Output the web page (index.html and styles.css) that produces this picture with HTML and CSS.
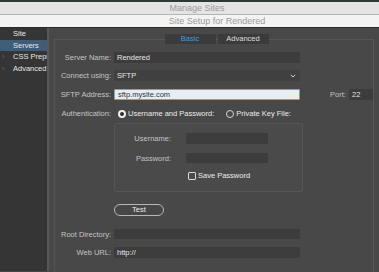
FILE: index.html
```html
<!DOCTYPE html>
<html lang="en">
<head>
    <meta charset="UTF-8">
    <title>Site Setup for Rendered</title>
    <link rel="stylesheet" href="styles.css">
</head>
<body>
    <div class="top-strip"></div>
    <div class="title-bar">Manage Sites</div>
    <div class="title-bar sub">Site Setup for Rendered</div>

    <div class="window">
        <div class="sidebar">
            <div class="side-item">Site</div>
            <div class="side-item active">Servers</div>
            <div class="side-item"><span class="arrow">&rsaquo;</span>CSS Preprocessors</div>
            <div class="side-item"><span class="arrow">&rsaquo;</span>Advanced</div>
        </div>

        <div class="main">
            <div class="tabs">
                <div class="tab selected">Basic</div>
                <div class="tab">Advanced</div>
            </div>

            <div class="panel">
                <div class="row first">
                    <label class="label">Server Name:</label>
                    <div class="field">Rendered</div>
                </div>

                <div class="row r2">
                    <label class="label">Connect using:</label>
                    <div class="field select">SFTP
                        <svg class="chev" width="6" height="4" viewBox="0 0 6 4"><path d="M0.8 0.8 L3 3 L5.2 0.8" fill="none" stroke="#cfcfcf" stroke-width="1"/></svg>
                    </div>
                </div>

                <div class="row r3">
                    <label class="label">SFTP Address:</label>
                    <div class="field light">sftp.mysite.com</div>
                    <label class="port-label">Port:</label>
                    <div class="field port">22</div>
                </div>

                <div class="row r4">
                    <label class="label">Authentication:</label>
                    <span class="radio on"></span><span class="opt">Username and Password:</span>
                    <span class="radio second"></span><span class="opt">Private Key File:</span>
                </div>

                <div class="auth-box">
                    <div class="row b1">
                        <label class="label small">Username:</label>
                        <div class="field short"></div>
                    </div>
                    <div class="row b2">
                        <label class="label small">Password:</label>
                        <div class="field short"></div>
                    </div>
                    <div class="row b3">
                        <span class="check"></span><span class="opt">Save Password</span>
                    </div>
                </div>

                <div class="row test-row">
                    <button class="test-btn">Test</button>
                </div>

                <div class="row r5">
                    <label class="label">Root Directory:</label>
                    <div class="field"></div>
                </div>

                <div class="row r6">
                    <label class="label">Web URL:</label>
                    <div class="field">http://</div>
                </div>
            </div>
        </div>
    </div>
</body>
</html>
```

FILE: styles.css
```css
body {
    margin: 0;
    width: 379px;
    height: 272px;
    overflow: hidden;
    background: #484848;
    font-family: "Liberation Sans", "DejaVu Sans", sans-serif;
    font-size: 7.5px;
    color: #c8c8c8;
}

.top-strip {
    height: 2px;
    background: #2f3a38;
}

.title-bar {
    height: 12px;
    line-height: 12px;
    background: #e4e4e4;
    border-bottom: 1px solid #b4b4b4;
    text-align: center;
    color: #9c9c9c;
    font-size: 9px;
    padding-left: 15px;
}

.title-bar.sub {
    height: 12px;
    background: #f3f3f3;
    border-bottom: 1px solid #2c2c2c;
    padding-left: 55px;
}

.window {
    display: flex;
    height: 243px;
}

/* sidebar */
.sidebar {
    width: 47px;
    flex-shrink: 0;
    background: #353535;
    border-right: 2px solid #595959;
    overflow: hidden;
}

.side-item {
    height: 11.5px;
    line-height: 11.5px;
    padding-left: 13px;
    white-space: nowrap;
    overflow: hidden;
    color: #e6e6e6;
    position: relative;
}

.side-item.active {
    background: #3f5d78;
}

.side-item .arrow {
    position: absolute;
    left: 2px;
    color: #6a6a6a;
}

/* main */
.main {
    flex: 1;
    padding: 6px 6px 0 5px;
}

.tabs {
    display: flex;
    justify-content: center;
    gap: 2px;
    padding-left: 5px;
    position: relative;
    z-index: 1;
}

.tab {
    width: 51px;
    height: 10px;
    line-height: 10px;
    background: #3b3b3b;
    text-align: center;
    color: #dedede;
}

.tab.selected {
    color: #3a9fe4;
}

.panel {
    margin-top: -5px;
    border: 1px solid #565656;
    border-bottom: none;
    height: 240px;
    padding-left: 1px;
}

.row {
    display: flex;
    align-items: center;
    height: 11px;
}

.row.first { margin-top: 12px; }
.row.r2 { margin-top: 7px; }
.row.r3 { margin-top: 8px; }
.row.r4 { margin-top: 8px; }
.row.test-row { margin-top: 12px; height: 12px; }
.row.r5 { margin-top: 13px; height: 10px; }
.row.r6 { margin-top: 8px; }

.label {
    width: 55px;
    flex-shrink: 0;
    text-align: right;
    padding-right: 3px;
    white-space: nowrap;
    color: #c4c4c4;
}

.field {
    width: 186px;
    height: 100%;
    box-sizing: border-box;
    background: #3c3c3c;
    border-radius: 1px;
    padding-left: 3px;
    line-height: 11px;
    color: #e6e6e6;
    position: relative;
}

.r5 .field { line-height: 10px; }

.field.select {
    background: #404040;
}

.chev {
    position: absolute;
    right: 4px;
    top: 4px;
}

.field.light {
    background: #ececec;
    border: 1px solid #6fa6cc;
    color: #333;
    line-height: 9px;
}

.port-label {
    margin-left: 30px;
    width: 16px;
    color: #c4c4c4;
}

.field.port {
    margin-left: 3px;
    width: 24px;
}

.radio {
    width: 6px;
    height: 6px;
    border-radius: 50%;
    border: 1px solid #d8d8d8;
    margin-left: 4px;
    margin-right: 2px;
    flex-shrink: 0;
}

.radio.on {
    border: 2px solid #f0f0f0;
    width: 4px;
    height: 4px;
    background: #2c2c2c;
}

.radio.second {
    margin-left: 12px;
}

.opt {
    color: #ececec;
    white-space: nowrap;
}

.auth-box {
    margin: 4px 0 0 58px;
    width: 187px;
    height: 67px;
    border: 1px solid #565656;
    border-radius: 2px;
    background: #4a4a4a;
}

.row.b1 { margin-top: 9px; }
.row.b2 { margin-top: 9px; height: 10px; }
.row.b3 { margin-top: 8px; height: 9px; }

.label.small {
    width: 56px;
    padding-right: 15px;
}

.field.short {
    width: 82px;
}

.check {
    width: 6px;
    height: 6px;
    border: 1px solid #d8d8d8;
    border-radius: 1px;
    margin-left: 73px;
    margin-right: 2px;
}

.test-btn {
    margin-left: 58px;
    width: 50px;
    height: 12px;
    padding: 0;
    border: 1px solid #b8b8b8;
    border-radius: 6px;
    background: #474747;
    color: #ececec;
    font-family: inherit;
    font-size: 7.5px;
    line-height: 10px;
}
```
